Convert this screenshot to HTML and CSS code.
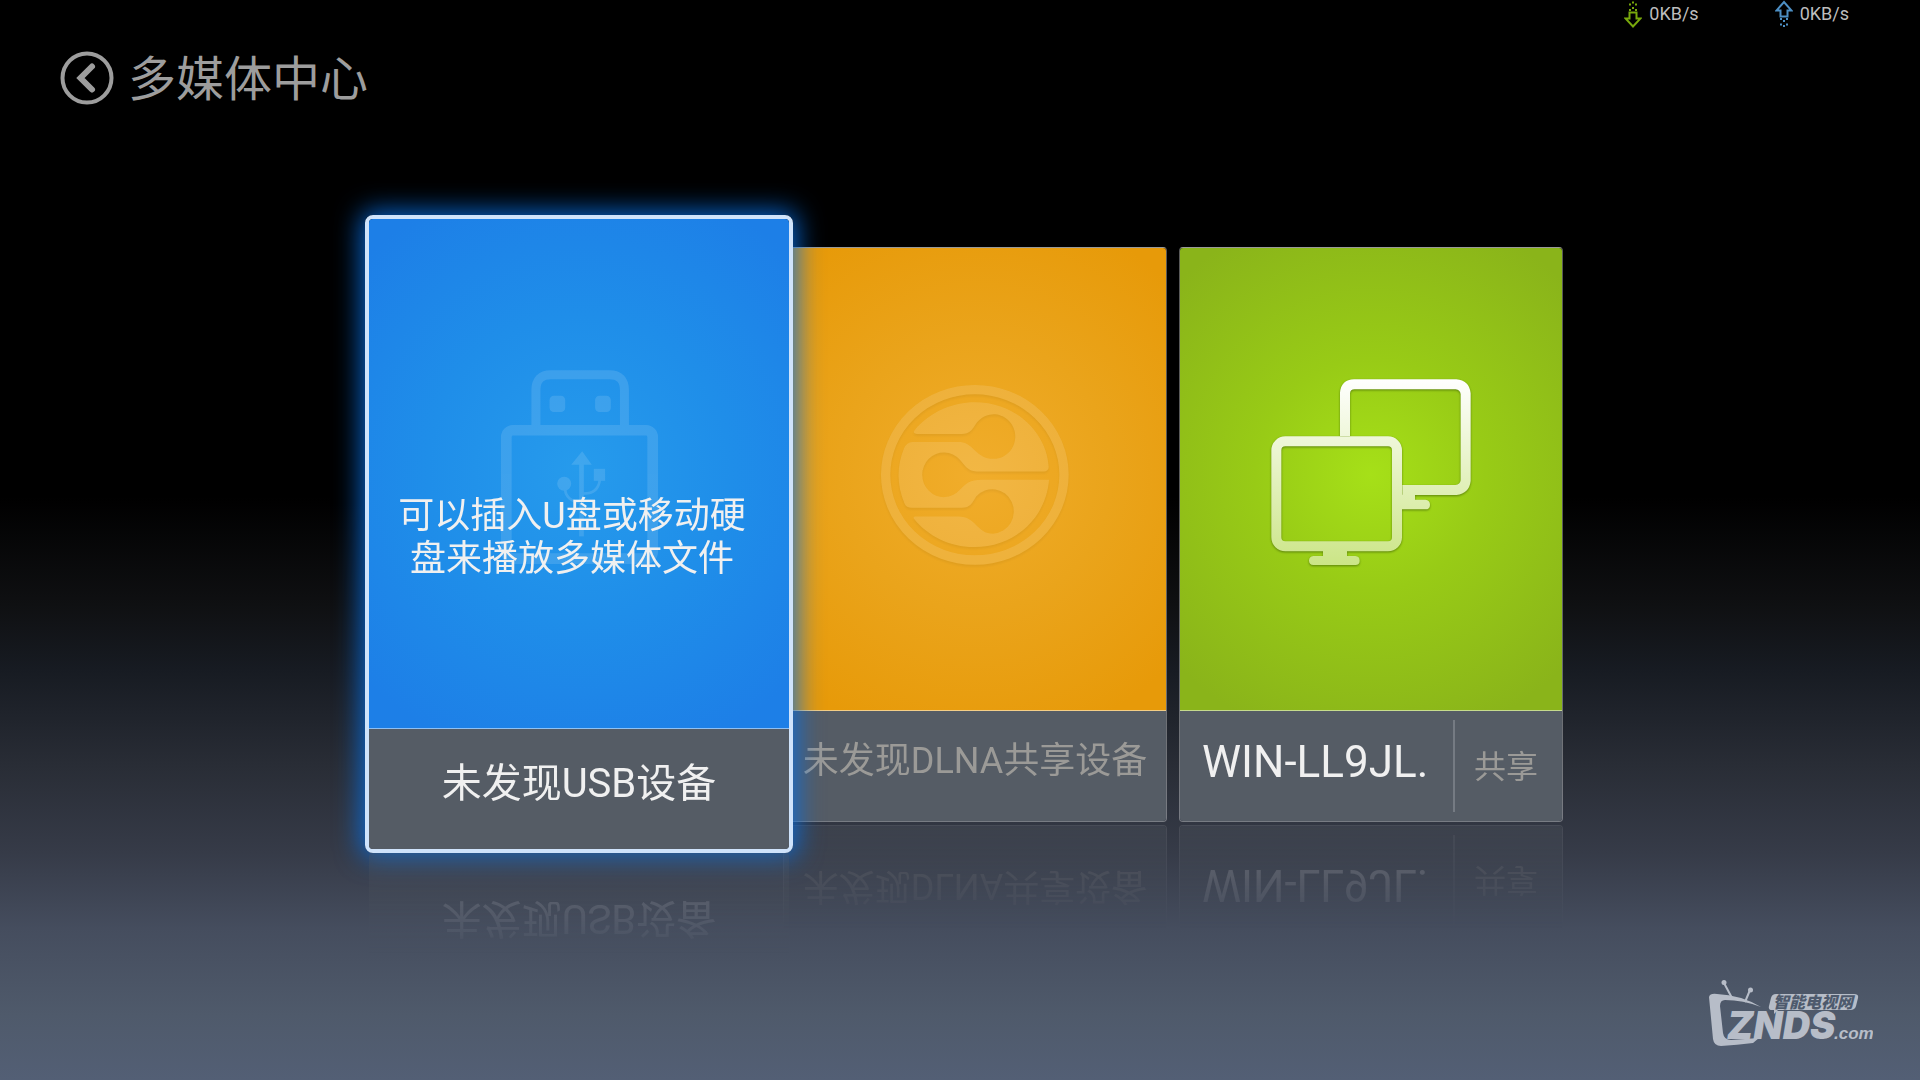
FILE: index.html
```html
<!DOCTYPE html>
<html lang="zh-CN">
<head>
<meta charset="utf-8">
<meta name="viewport" content="width=device-width, initial-scale=1">
<title>多媒体中心</title>
<link rel="stylesheet" href="styles.css">
</head>
<body>
<div class="page">
  <div class="status">
    <div class="rate">
      <svg class="rate-icon down" viewBox="0 0 18 28" aria-hidden="true">
        <path class="line" d="M5.500 12.500h7v6h4L9 26.500 1.500 18.500h4z"/>
        <path class="dots" d="M6 11V8M9 9V6M12 11V8M6 5.500v-3M12 5.500v-3M9 3.500V1"/>
      </svg>
      <span>0KB/s</span>
    </div>
    <div class="rate">
      <svg class="rate-icon up" viewBox="0 0 18 28" aria-hidden="true">
        <path class="line" d="M5.500 16.500h7v-6h4L9 2 1.500 10.500h4z"/>
        <path class="dots" d="M6 18v3M9 20v3M12 18v3M6 23.500v3M12 23.500v3M9 25v3"/>
      </svg>
      <span>0KB/s</span>
    </div>
  </div>

  <header class="header">
    <button class="back" type="button" aria-label="返回">
      <svg viewBox="0 0 54 54" aria-hidden="true">
        <circle cx="27" cy="27" r="24.500"/>
        <path class="chevron" d="M32 15.500 20.500 27 32 38.500"/>
      </svg>
    </button>
    <h1 class="title">多媒体中心</h1>
  </header>

  <main class="cards">
    <button class="card focused" type="button">
      <span class="face">
        <span class="tile blue">
          <svg class="icon usb" viewBox="480 540 472 583" aria-hidden="true">
            <g fill="none" stroke="#fff">
              <path stroke-width="27" d="M585 706V600Q585 554 630 554H806Q851 554 851 600V706"/>
              <rect stroke-width="32" x="496" y="721" width="440" height="386" rx="20"/>
              <path stroke-width="14" d="M722 822V1040"/>
              <path stroke-width="8" d="M673 900Q676 932 718 938M726 911Q772 913 777 870"/>
            </g>
            <g fill="#fff">
              <rect x="626" y="617" width="47" height="49" rx="13"/>
              <rect x="763" y="617" width="47" height="49" rx="13"/>
              <path d="M724 784 753 825H691Z"/>
              <circle cx="670" cy="882" r="21"/>
              <rect x="759" y="837" width="34" height="36"/>
            </g>
          </svg>
          <span class="hint">可以插入U盘或移动硬<br>盘来播放多媒体文件</span>
        </span>
        <span class="caption"><span class="name">未发现USB设备</span></span>
      </span>
    </button>

    <button class="card" type="button">
      <span class="face">
        <span class="tile orange">
          <svg class="icon dlna" viewBox="303 465 565 541" aria-hidden="true">
            <ellipse cx="585" cy="735" rx="268" ry="256" fill="none" stroke="#fff" stroke-width="28"/>
            <g fill="#fff">
              <path d="M412 612Q396 610 404 601C450 545 520 517 585 517C710 517 802 610 807 712Q806 724 792 725H590C562 725 553 703 540 690A65 67 0 1 0 540 780C560 760 570 751 606 750H808C800 860 710 952 582 952C510 952 445 920 402 867Q398 860 408 860H535C590 860 590 912 640 912A65 67 0 1 0 589 800C578 818 572 834 545 834H395Q379 834 374 822C350 765 350 710 372 656Q380 636 398 636H542C582 640 590 687 640 687A65 67 0 1 0 588 582C578 598 570 612 545 612Z"/>
            </g>
          </svg>
        </span>
        <span class="caption"><span class="name small">未发现DLNA共享设备</span></span>
      </span>
    </button>

    <button class="card" type="button">
      <span class="face">
        <span class="tile green">
          <svg class="icon screens" viewBox="333 450 600 561" aria-hidden="true">
            <defs>
              <linearGradient id="sheen" gradientUnits="userSpaceOnUse" x1="0" y1="450" x2="0" y2="1010">
                <stop offset="0" stop-color="#fff"/>
                <stop offset="1" stop-color="#cbe586"/>
              </linearGradient>
            </defs>
            <g fill="none" stroke="url(#sheen)" stroke-width="30">
              <path d="M555 621V492Q557 467 583 466H888Q914 468 917 494V755Q914 780 888 783H727"/>
              <rect x="349" y="637" width="362" height="315" rx="27"/>
            </g>
            <g fill="url(#sheen)">
              <path d="M726 797H765V812H796Q810 813 810 827T796 841H726Z"/>
              <path d="M489 966H561V981H586Q599 982 599 995T586 1008H460Q447 1007 447 995T460 981H489Z"/>
            </g>
          </svg>
        </span>
        <span class="caption split">
          <span class="host">WIN-LL9JL.</span>
          <span class="kind">共享</span>
        </span>
      </span>
    </button>
  </main>

  <footer class="footer">
    <svg class="logo" viewBox="0 0 164 68" role="img" aria-label="智能电视网 ZNDS.com">
      <g class="mark">
        <circle cx="15" cy="3.500" r="2.500"/>
        <circle cx="41.500" cy="11" r="2.500"/>
        <path class="aerial" d="M15 4 23 19M41 11 36 23"/>
        <path d="M0 18Q1 14 8 15Q32 16 52 28Q34 21 16 21Q11 21 11 27L14 54Q15 61 22 61L50 59 44 64Q28 66 12 67Q5 67 4 60Z"/>
        <path d="M65 15H145Q150 15 149 19L147 27Q146 31 141 31H69L65 35V31H63Q59 31 60 27L62 19Q63 15 67 15Z"/>
      </g>
      <text class="logo-cn" x="64" y="29">智能电视网</text>
      <text class="logo-name" x="18" y="60">ZNDS</text>
      <text class="logo-com" x="125" y="60">.com</text>
    </svg>
  </footer>
</div>
</body>
</html>
```
FILE: styles.css
```css
* {
  box-sizing: border-box;
}

body {
  margin: 0;
  color: #f0f0f0;
  background: #000;
  font-family: Roboto, "Noto Sans CJK SC", sans-serif;
}

button {
  margin: 0;
  padding: 0;
  border: 0;
  background: none;
  color: inherit;
  font: inherit;
  cursor: pointer;
}

.page {
  display: flex;
  flex-direction: column;
  min-height: 100vh;
  background: linear-gradient(#000 46%, #0f1012 56%, #171b22 62%, #292d36 71%, #363b48 79%, #454d5e 86%, #4f5a6b 94%, #535f75 100%);
}

/* network speed */
.status {
  display: flex;
  justify-content: flex-end;
  gap: 76px;
  height: 50px;
  padding-right: 71px;
  color: #bdbdbd;
  font-size: 18px;
  line-height: 28px;
}

.rate {
  display: flex;
  gap: 7px;
  height: 28px;
}

.rate-icon {
  width: 18px;
  height: 28px;
  fill: none;
  stroke-width: 2;
}

.rate-icon .dots {
  stroke-dasharray: 2 1;
}

.down {
  stroke: #78a80c;
}

.up {
  stroke: #4d8fc4;
}

/* title row */
.header {
  display: flex;
  align-items: center;
  gap: 14px;
  height: 56px;
  padding-left: 60px;
  color: #9d9d9d;
}

.back,
.back svg {
  display: block;
  width: 54px;
  height: 54px;
}

.back svg {
  fill: none;
  stroke: #9d9d9d;
  stroke-width: 4;
}

.back .chevron {
  stroke-width: 6;
  stroke-linecap: round;
}

.title {
  margin: 0;
  padding-top: 4px;
  font-size: 48px;
  line-height: 56px;
  font-weight: 400;
}

/* source cards */
.cards {
  display: flex;
  justify-content: center;
  align-items: center;
  gap: 12px;
  padding: 109px 0 0 30px;
}

.card {
  flex: 0 1 384px;
}

.face {
  display: block;
  border: 1px solid rgba(255, 255, 255, 0.35);
  border-top-color: rgba(255, 255, 255, 0.6);
  border-radius: 4px;
  overflow: hidden;
  -webkit-box-reflect: below 3px linear-gradient(transparent 82%, rgba(0, 0, 0, 0.3));
}

.tile {
  position: relative;
  display: flex;
  justify-content: center;
  align-items: center;
  height: 463px;
  padding-bottom: 8px;
  border-bottom: 1px solid rgba(255, 255, 255, 0.5);
}

.blue {
  padding-bottom: 14px;
  background: radial-gradient(circle at 50% 49%, #269bec, #1f8ee9 45%, #1d7fe7 90%);
}

.orange {
  background: radial-gradient(circle at 50% 49%, #f1ad2b, #eaa41b 45%, #e79a09 90%);
}

.green {
  padding-bottom: 12px;
  background: radial-gradient(circle at 50% 49%, #a6e018, #98cb16 38%, #8ab41a 90%);
}

.usb {
  width: 157px;
  height: 194px;
  opacity: 0.12;
}

.dlna {
  width: 188px;
  height: 180px;
  opacity: 0.12;
  filter: drop-shadow(0 2px 1px rgba(0, 0, 0, 0.4));
}

.screens {
  width: 200px;
  height: 187px;
  filter: drop-shadow(0 1px 1px rgba(50, 80, 0, 0.6));
}

.hint {
  position: absolute;
  inset: 276px 14px auto 0;
  font-size: 36px;
  line-height: 43px;
  text-align: center;
  white-space: nowrap;
}

.caption {
  display: flex;
  justify-content: center;
  align-items: center;
  height: 110px;
  padding-bottom: 10px;
  background: #555c65;
}

.name {
  font-size: 40px;
  line-height: 48px;
  white-space: nowrap;
}

.name.small {
  color: #9b9a97;
  font-size: 36px;
}

.split {
  justify-content: space-between;
  padding: 9px 24px 9px 22px;
}

.host {
  padding-bottom: 8px;
  font-size: 44px;
  line-height: 52px;
}

.kind {
  display: flex;
  align-items: center;
  align-self: stretch;
  padding-bottom: 4px;
  padding-left: 19px;
  border-left: 2px solid #757b83;
  color: #9b9a97;
  font-size: 32px;
}

/* the card under the remote's focus stands above its neighbours */
.focused {
  position: relative;
  z-index: 1;
  flex-basis: 428px;
  margin: 0 -22px;
  border: 4px solid #cfe3fb;
  border-radius: 8px;
  box-shadow: 0 0 26px 4px rgba(8, 110, 225, 0.9);
}

.focused .face {
  border-width: 0;
  -webkit-box-reflect: below 4px linear-gradient(transparent 84%, rgba(0, 0, 0, 0.26));
}

.focused .tile {
  height: 510px;
}

.focused .caption {
  height: 120px;
}

/* site mark */
.footer {
  display: flex;
  justify-content: flex-end;
  margin-top: auto;
  padding: 0 47px 33px 0;
}

.logo {
  width: 164px;
  height: 68px;
  fill: #b7bdc8;
}

.aerial {
  fill: none;
  stroke: #b7bdc8;
  stroke-width: 2;
}

.logo-cn {
  fill: #4e5a6d;
  font: italic 900 16px "Noto Sans CJK SC", sans-serif;
}

.logo-name {
  font: italic 900 38px Inter, sans-serif;
}

.logo-com {
  font: italic 700 17px "Liberation Sans", sans-serif;
}
```
